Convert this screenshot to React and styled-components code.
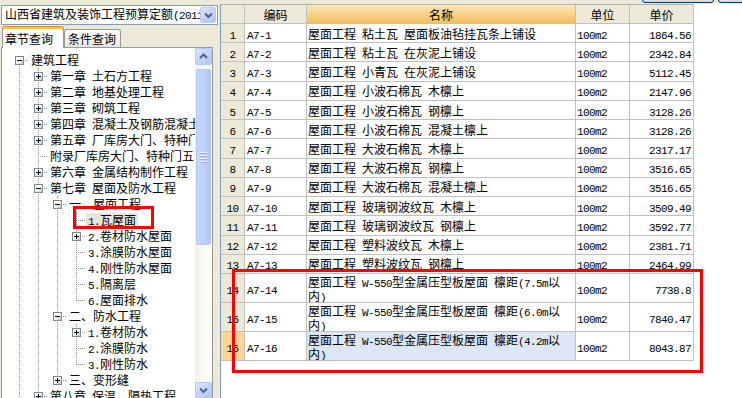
import React from "react";
import styled, { createGlobalStyle } from "styled-components";

const CJK = `"Noto Sans CJK SC", "Noto Sans", sans-serif`;
const MONO = `"Liberation Mono", "DejaVu Sans Mono", monospace`;

const GlobalStyle = createGlobalStyle`
  html, body {
    margin: 0;
    padding: 0;
    overflow: hidden;
    background: #ECE9D8;
  }
  body {
    font-family: ${CJK};
    font-size: 12px;
    color: #000;
  }
`;

// ascii runs look like the half-width SimSun glyphs: 6px a char
const Ascii = styled.span`
  font-family: ${MONO};
  font-size: 11px;
  letter-spacing: -0.6px;
`;

function mixed(text) {
  return text.split(/([\x20-\x7e]+)/).map((part, i) =>
    /^[\x20-\x7e]+$/.test(part) ? <Ascii key={i}>{part}</Ascii> : part
  );
}

const treeData = {
  label: "建筑工程", open: true, children: [
    { label: "第一章 土石方工程", kids: true },
    { label: "第二章 地基处理工程", kids: true },
    { label: "第三章 砌筑工程", kids: true },
    { label: "第四章 混凝土及钢筋混凝土工程", kids: true },
    { label: "第五章 厂库房大门、特种门、木结构工程", kids: true },
    { label: "附录厂库房大门、特种门五金表" },
    { label: "第六章 金属结构制作工程", kids: true },
    { label: "第七章 屋面及防水工程", open: true, children: [
      { label: "一、屋面工程", open: true, children: [
        { label: "1.瓦屋面", selected: true },
        { label: "2.卷材防水屋面", kids: true },
        { label: "3.涂膜防水屋面" },
        { label: "4.刚性防水屋面" },
        { label: "5.隔离层" },
        { label: "6.屋面排水" },
      ] },
      { label: "二、防水工程", open: true, children: [
        { label: "1.卷材防水", kids: true },
        { label: "2.涂膜防水" },
        { label: "3.刚性防水" },
      ] },
      { label: "三、变形缝", kids: true },
    ] },
    { label: "第八章 保温、隔热工程", kids: true, more: true },
  ],
};

function flatten(node, level, trail, hasNext, firstRoot, out) {
  const own = firstRoot ? "first" : hasNext ? "tee" : "elbow";
  out.push({
    level,
    label: node.label,
    guides: [...trail, own],
    toggle: node.open ? "minus" : node.kids ? "plus" : null,
    selected: node.selected,
  });
  if (node.open) {
    const next = [...trail, hasNext ? "pipe" : "blank"];
    node.children.forEach((c, i) =>
      flatten(c, level + 1, next, i < node.children.length - 1 || !!c.more, false, out)
    );
  }
  return out;
}

const treeRows = flatten(treeData, 0, [], true, true, []);

const quotas = [
  ["A7-1", "屋面工程 粘土瓦 屋面板油毡挂瓦条上铺设", "1864.56"],
  ["A7-2", "屋面工程 粘土瓦 在灰泥上铺设", "2342.84"],
  ["A7-3", "屋面工程 小青瓦 在灰泥上铺设", "5112.45"],
  ["A7-4", "屋面工程 小波石棉瓦 木檩上", "2147.96"],
  ["A7-5", "屋面工程 小波石棉瓦 钢檩上", "3128.26"],
  ["A7-6", "屋面工程 小波石棉瓦 混凝土檩上", "3128.26"],
  ["A7-7", "屋面工程 大波石棉瓦 木檩上", "2317.17"],
  ["A7-8", "屋面工程 大波石棉瓦 钢檩上", "3516.65"],
  ["A7-9", "屋面工程 大波石棉瓦 混凝土檩上", "3516.65"],
  ["A7-10", "屋面工程 玻璃钢波纹瓦 木檩上", "3509.49"],
  ["A7-11", "屋面工程 玻璃钢波纹瓦 钢檩上", "3592.77"],
  ["A7-12", "屋面工程 塑料波纹瓦 木檩上", "2381.71"],
  ["A7-13", "屋面工程 塑料波纹瓦 钢檩上", "2464.99"],
  ["A7-14", "屋面工程 W-550型金属压型板屋面 檩距(7.5m以\n内)", "7738.8"],
  ["A7-15", "屋面工程 W-550型金属压型板屋面 檩距(6.0m以\n内)", "7840.47"],
  ["A7-16", "屋面工程 W-550型金属压型板屋面 檩距(4.2m以\n内)", "8043.87"],
];

const SELECTED_ROW = 16;

export default function App() {
  return (
    <>
      <GlobalStyle />
      <Window>
        <LeftPane>
          <Combo>
            <ComboText>{mixed("山西省建筑及装饰工程预算定额(2011)")}</ComboText>
            <XpButton $w={16} $h={16}>
              <Chevron dir="down" />
            </XpButton>
          </Combo>
          <TabRow>
            <Tab $active>章节查询</Tab>
            <Tab>条件查询</Tab>
          </TabRow>
          <Frame>
            <TreeArea>
              {treeRows.map((r, i) => (
                <TreeRow key={i}>
                  {r.guides.map((g, j) => (
                    <Guide key={j} $kind={g}>
                      {j === r.guides.length - 1 && r.toggle && <Toggle $plus={r.toggle === "plus"} />}
                    </Guide>
                  ))}
                  <Label $selected={r.selected}>{mixed(r.label)}</Label>
                </TreeRow>
              ))}
            </TreeArea>
            <ScrollBar>
              <XpButton $w={17} $h={17}>
                <Chevron dir="up" />
              </XpButton>
              <Track>
                <Thumb $top={4} $h={176}>
                  <Grip />
                  <Grip />
                  <Grip />
                  <Grip />
                </Thumb>
              </Track>
              <XpButton $w={17} $h={17}>
                <Chevron dir="down" />
              </XpButton>
            </ScrollBar>
          </Frame>
        </LeftPane>

        <RightPane>
          <TopStrip>
            <StripButton $w={72} />
            <StripButton $w={75} />
          </TopStrip>
          <GridArea>
            <Grid>
              <Row $head>
                <HeadCell $w={24} />
                <HeadCell $w={62}>编码</HeadCell>
                <HeadCell $w={269} $sorted>名称</HeadCell>
                <HeadCell $w={54}>单位</HeadCell>
                <HeadCell $w={64}>单价</HeadCell>
              </Row>
              {quotas.map(([code, name, price], i) => {
                const n = i + 1;
                const tall = name.includes("\n");
                const sel = n === SELECTED_ROW;
                return (
                  <Row key={code} $tall={tall}>
                    <NumCell $w={24} $selected={sel}>
                      <span>{mixed(String(n))}</span>
                    </NumCell>
                    <CodeCell $w={62}>
                      <span>{mixed(code)}</span>
                    </CodeCell>
                    <NameCell $w={269} $tall={tall} $selected={sel}>
                      <span>{mixed(name)}</span>
                    </NameCell>
                    <UnitCell $w={54}>
                      <span>{mixed("100m2")}</span>
                    </UnitCell>
                    <PriceCell $w={64}>
                      <span>{mixed(price)}</span>
                    </PriceCell>
                  </Row>
                );
              })}
            </Grid>
          </GridArea>
        </RightPane>

        <Mark $x={73} $y={206} $w={81} $h={23} />
        <Mark $x={232} $y={269} $w={471} $h={104} />
      </Window>
    </>
  );
}

function Chevron({ dir }) {
  const pts = dir === "up" ? "1,5 4.5,1.5 8,5" : "1,1.5 4.5,5 8,1.5";
  return (
    <svg width="9" height="7" viewBox="0 0 9 7">
      <polyline points={pts} fill="none" stroke="#4D6185" strokeWidth="2" />
    </svg>
  );
}

const Window = styled.div`
  position: relative;
  display: flex;
  width: 742px;
  height: 400px;
  overflow: hidden;
  background: #ECE9D8;
`;

const LeftPane = styled.div`
  width: 220px;
  flex: none;
  display: flex;
  flex-direction: column;
  box-sizing: border-box;
  padding: 5px 0 0 1px;
`;

const Combo = styled.div`
  width: 217px;
  height: 20px;
  flex: none;
  box-sizing: border-box;
  border: 1px solid #7F9DB9;
  background: #fff;
  display: flex;
  align-items: center;
  padding: 0 1px 0 3px;
  white-space: nowrap;
`;

const ComboText = styled.span`
  flex: 1;
  min-width: 0;
  overflow: hidden;
  line-height: 18px;
`;

const XpButton = styled.div`
  flex: none;
  width: ${p => p.$w}px;
  height: ${p => p.$h}px;
  box-sizing: border-box;
  border: 1px solid #B6C9F4;
  border-radius: 2px;
  background: linear-gradient(135deg, #DCE6FD 0%, #C4D4FB 45%, #B1C5F5 100%);
  display: flex;
  align-items: center;
  justify-content: center;
`;

const TabRow = styled.div`
  position: relative;
  z-index: 1;
  height: 22px;
  flex: none;
  margin: 1px 0 -1px 1px;
  display: flex;
  align-items: flex-end;
`;

const Tab = styled.div`
  box-sizing: border-box;
  width: ${p => (p.$active ? 62 : 57)}px;
  height: ${p => (p.$active ? 22 : 18)}px;
  margin-bottom: ${p => (p.$active ? 0 : 1)}px;
  padding-left: ${p => (p.$active ? 2 : 3)}px;
  border: 1px solid #919B9C;
  border-bottom: none;
  border-radius: 3px 3px 0 0;
  border-top-color: ${p => (p.$active ? "#E68B2C" : "#919B9C")};
  box-shadow: ${p => (p.$active ? "inset 0 2px 0 #FFC73C" : "none")};
  background: ${p => (p.$active ? "#FCFCFE" : "linear-gradient(#FFFFFF, #F4F3EE 70%, #E3E1D8)")};
  display: flex;
  align-items: center;
  padding-top: ${p => (p.$active ? 2 : 0)}px;
  line-height: 14px;
  white-space: nowrap;
`;

const Frame = styled.div`
  flex: 1;
  width: 212px;
  box-sizing: border-box;
  border: 1px solid #919B9C;
  background: #fff;
  display: flex;
  overflow: hidden;
`;

const TreeArea = styled.div`
  flex: 1;
  min-width: 0;
  overflow: hidden;
  padding: 4px 0 0 8px;
`;

const TreeRow = styled.div`
  display: flex;
  height: 16px;
  white-space: nowrap;
`;

const vDots = "repeating-linear-gradient(to bottom, #8F8F8F 0 1px, transparent 1px 2px)";
const hDots = "repeating-linear-gradient(to right, #8F8F8F 0 1px, transparent 1px 2px)";

const guideLines = {
  blank: "none",
  pipe: `background-image: ${vDots}; background-size: 1px 100%; background-position: 9px 0;`,
  tee: `background-image: ${vDots}, ${hDots}; background-size: 1px 100%, 10px 1px; background-position: 9px 0, 9px 8px;`,
  elbow: `background-image: ${vDots}, ${hDots}; background-size: 1px 9px, 10px 1px; background-position: 9px 0, 9px 8px;`,
  first: `background-image: ${vDots}, ${hDots}; background-size: 1px 8px, 10px 1px; background-position: 9px 8px, 9px 8px;`,
};

const Guide = styled.span`
  flex: none;
  width: 19px;
  height: 16px;
  box-sizing: border-box;
  padding: 4px 0 0 5px;
  background-repeat: no-repeat;
  ${p => (p.$kind === "blank" ? "" : guideLines[p.$kind])}
`;

const Toggle = styled.span`
  display: block;
  width: 9px;
  height: 9px;
  box-sizing: border-box;
  border: 1px solid #7A8A99;
  background:
    linear-gradient(#000, #000) 1px 3px / 5px 1px no-repeat,
    ${p => (p.$plus ? "linear-gradient(#000, #000) 3px 1px / 1px 5px no-repeat," : "")}
    linear-gradient(135deg, #FFFFFF 35%, #C9C6B6);
`;

const Label = styled.span`
  flex: none;
  height: 14px;
  margin-top: 1px;
  padding: 0 2px;
  line-height: 14px;
  background: ${p => (p.$selected ? "#E8E6DA" : "transparent")};
`;

const ScrollBar = styled.div`
  flex: none;
  width: 17px;
  display: flex;
  flex-direction: column;
  background: linear-gradient(to right, #F3F1EC, #FEFEFB);
`;

const Track = styled.div`
  flex: 1;
`;

const Thumb = styled.div`
  margin: ${p => p.$top}px 0 0 1px;
  width: 15px;
  height: ${p => p.$h}px;
  box-sizing: border-box;
  border: 1px solid #B4C7F3;
  border-radius: 2px;
  background: linear-gradient(to right, #C8D7FC, #BACFF9 60%, #B0C6F6);
  display: flex;
  flex-direction: column;
  align-items: center;
  justify-content: center;
  gap: 1px;
`;

const Grip = styled.span`
  width: 7px;
  height: 1px;
  background: #EEF4FE;
  border-bottom: 1px solid #8CB0F8;
`;

const RightPane = styled.div`
  flex: 1;
  min-width: 0;
  display: flex;
  flex-direction: column;
`;

const TopStrip = styled.div`
  height: 4px;
  flex: none;
  overflow: hidden;
  display: flex;
  align-items: flex-end;
  gap: 4px;
  padding-left: 422px;
`;

const StripButton = styled.span`
  flex: none;
  width: ${p => p.$w}px;
  height: 21px;
  margin-bottom: 1px;
  box-sizing: border-box;
  border: 1px solid #003C74;
  border-radius: 3px;
  background: linear-gradient(#FFFFFF, #F0F0EA 80%, #D6D0C5);
`;

const GridArea = styled.div`
  flex: 1;
  background: #fff;
  border-left: 1px solid #7F9DB9;
`;

const Grid = styled.div`
  width: fit-content;
  border-top: 1px solid #B0B0B0;
`;

const Row = styled.div`
  display: flex;
  height: ${p => (p.$head ? 19 : p.$tall ? 29 : 19.24)}px;
`;

const Cell = styled.div`
  flex: none;
  width: ${p => p.$w}px;
  box-sizing: border-box;
  border-right: 1px solid #C0C0C0;
  border-bottom: 1px solid #C0C0C0;
  display: flex;
  align-items: center;
  overflow: hidden;
  white-space: nowrap;
  line-height: 12px;
  padding-top: 3px;
`;

const HeadCell = styled(Cell)`
  justify-content: center;
  padding-top: 2px;
  background: ${p => (p.$sorted ? "linear-gradient(#FCE6B8, #F8D187 55%, #F4BF5C)" : "#ECE9D8")};
`;

const NumCell = styled(Cell)`
  justify-content: center;
  background: ${p => (p.$selected ? "#FFD595" : "#ECE9D8")};
`;

const CodeCell = styled(Cell)`
  padding-left: 2px;
`;

const NameCell = styled(Cell)`
  padding-left: 1px;
  align-items: ${p => (p.$tall ? "flex-start" : "center")};
  padding-top: ${p => (p.$tall ? 2 : 3)}px;
  white-space: pre-line;
  background: ${p => (p.$selected ? "#DCE6F4" : "#fff")};
`;

const UnitCell = styled(Cell)`
  padding-left: 1px;
`;

const PriceCell = styled(Cell)`
  justify-content: flex-end;
  padding-right: 2px;
`;

const Mark = styled.div`
  position: absolute;
  left: ${p => p.$x}px;
  top: ${p => p.$y}px;
  width: ${p => p.$w}px;
  height: ${p => p.$h}px;
  box-sizing: border-box;
  border: 3px solid #FF0000;
  pointer-events: none;
`;
